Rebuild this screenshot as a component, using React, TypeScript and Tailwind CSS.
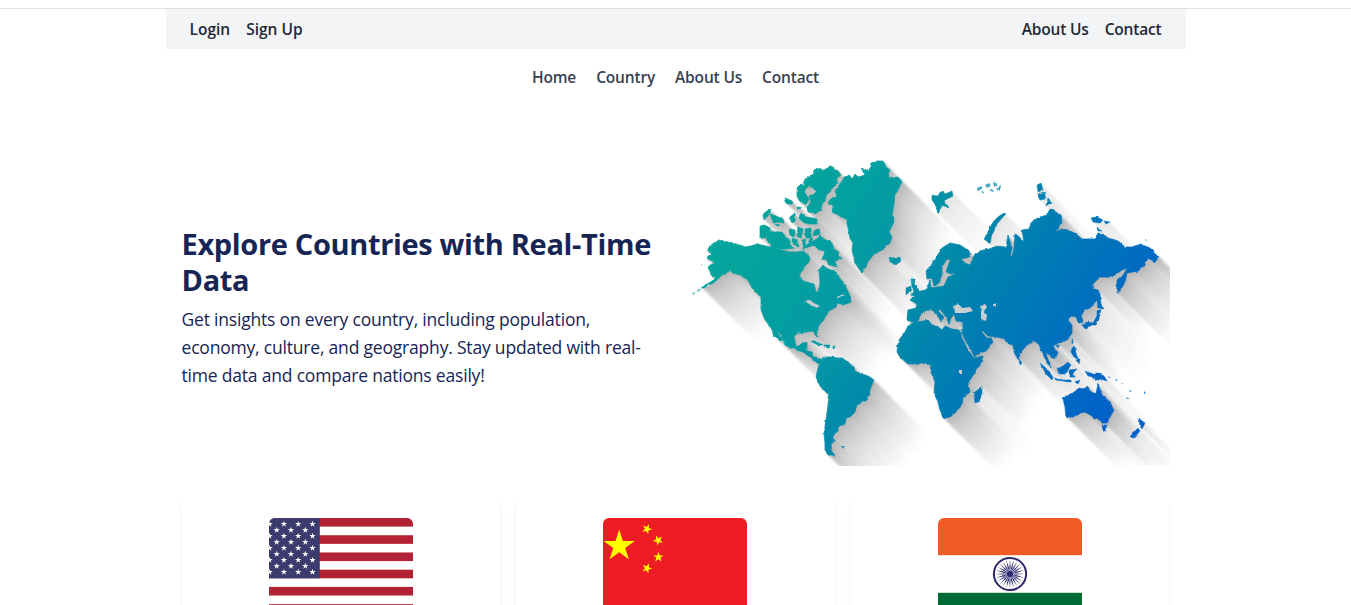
import React from "react";

const LARGE_LAND = [
  // North America
  "M719 240 L711 245 707 250 712 253 706 258 715 262 708 267 711 275 716 277 712 281 701 288 704 288 715 282 722 275 730 271 740 275 748 280 753 290 761 297 761 310 765 320 770 326 774 335 780 341 782 340 776 330 780 334 785 345 793 349 803 352 810 357 816 362 820 364 822 360 817 357 813 357 812 352 807 351 807 342 802 343 798 347 795 343 794 336 798 333 807 332 813 331 816 336 818 337 817 331 819 325 823 321 826 316 829 311 836 307 838 303 844 305 851 302 850 296 846 287 841 280 837 273 833 270 828 269 823 265 819 270 820 283 818 292 816 292 814 284 803 281 799 275 804 267 809 262 810 257 803 251 796 252 790 252 782 250 770 247 757 244 751 246 745 247 733 243Z",
  // Arctic archipelago
  "M803 250 L804 241 807 246 810 239 812 238 813 242 820 235 824 239 832 243 834 249 839 252 838 256 842 258 834 261 838 267 829 265 826 260 822 259 825 252 818 249 814 245 810 246Z",
  "M766 230 L774 232 782 232 786 237 790 240 790 246 794 248 788 249 780 249 771 247 767 240Z",
  "M760 226 L764 225 770 227 769 231 766 234 766 238 760 237Z",
  "M770 213 L776 216 783 219 784 223 778 222 773 223Z M763 215 L766 211 771 210 768 216 764 220Z M785 198 L792 201 793 204 787 204Z M775 224 L780 225 777 226Z",
  "M789 229 L795 230 794 237 790 235Z M792 238 L797 240 799 247 794 245Z M798 227 L803 229 801 238 797 236Z M805 229 L811 228 811 238 806 238Z M814 230 L819 229 820 234 813 236Z M802 240 L806 239 803 245Z",
  "M801 212 L806 217 812 218 817 219 817 224 809 224 802 222 799 218Z M790 217 L795 213 795 221 792 223Z M797 206 L801 208 798 210Z",
  "M803 182 L807 177 812 175 815 170 822 168 824 170 831 166 838 171 841 175 836 179 839 183 833 187 830 192 826 195 826 200 822 204 821 209 817 213 808 212 807 207 811 203 809 196 817 192 812 187 806 187Z",
  "M797 188 L801 184 807 187 805 193 809 199 806 204 800 202 797 196Z",
  // Greenland
  "M828 203 L831 198 837 197 835 191 840 184 844 178 849 175 852 179 855 174 858 177 865 175 861 168 869 171 871 163 877 161 883 161 886 167 890 170 889 176 893 178 898 177 902 182 898 190 895 193 894 204 893 210 892 216 894 222 889 232 892 237 890 243 882 250 874 254 868 262 865 268 862 273 855 263 852 250 853 243 850 238 848 228 846 219 838 215 832 212 833 206Z",
  // South America
  "M820 363 L823 357 832 357 837 358 842 358 849 363 854 367 855 371 862 374 868 376 874 380 870 390 867 400 857 405 855 412 850 417 846 418 845 424 838 427 838 431 833 436 835 441 831 444 832 452 835 455 828 455 825 450 825 443 824 434 826 420 828 405 829 395 820 386 816 377 818 368Z",
  // Africa
  "M913 323 L928 320 932 325 937 326 942 330 945 326 952 329 959 330 962 338 968 350 973 357 983 356 981 363 972 377 968 383 970 392 963 398 962 405 955 413 950 417 943 418 940 410 938 402 934 393 935 382 931 372 930 365 922 363 915 364 908 364 900 357 897 352 898 344 899 340 905 332 908 326Z",
  // Eurasia
  "M908 310 L907 320 913 323 918 321 923 312 930 309 937 314 941 322 944 317 938 311 940 309 946 317 949 324 951 318 954 315 956 321 963 322 963 329 961 330 965 340 970 348 974 356 979 354 987 350 993 342 991 338 987 338 981 331 983 331 988 336 997 337 1005 339 1009 344 1013 345 1014 352 1018 360 1021 352 1027 345 1035 341 1040 347 1043 354 1047 363 1051 368 1049 362 1045 352 1049 355 1054 359 1058 353 1053 346 1058 343 1067 340 1072 333 1072 325 1068 320 1071 316 1076 317 1079 323 1083 322 1081 315 1085 310 1090 308 1097 300 1098 290 1093 289 1092 285 1100 277 1108 277 1115 275 1122 270 1127 268 1124 274 1117 280 1117 293 1120 291 1125 282 1127 273 1138 271 1145 265 1148 258 1155 262 1159 257 1150 248 1140 244 1132 247 1125 247 1118 241 1108 238 1103 234 1098 233 1095 239 1082 239 1076 234 1068 230 1061 229 1055 232 1062 223 1061 215 1054 211 1050 209 1047 215 1040 217 1032 221 1029 229 1022 230 1024 242 1017 235 1015 234 1014 248 1012 256 1010 256 1012 248 1008 235 1006 247 995 246 990 249 983 250 975 254 970 265 965 263 961 259 970 257 969 251 960 245 950 243 942 248 935 260 926 271 927 279 932 278 934 286 939 283 942 275 942 267 947 259 950 260 946 272 951 274 957 274 948 277 944 286 937 287 931 288 930 280 927 289 918 292 910 300 917 304 916 308Z",
  // Australia
  "M1063 398 L1073 393 1079 388 1083 389 1088 386 1091 392 1096 394 1098 384 1102 395 1110 402 1114 410 1110 417 1107 423 1102 423 1097 418 1094 419 1092 416 1085 412 1080 413 1073 417 1066 417 1065 407Z",
];

const SMALL_LAND = [
  "M889 257 L894 258 900 257 901 261 896 265 890 262Z",
  "M911 279 L915 279 914 284 918 288 920 294 911 296 914 291 912 287Z M906 288 L911 286 911 292 906 294Z",
  "M932 195 L937 196 939 193 943 191 945 194 952 191 953 196 947 199 944 201 949 208 942 205 938 214 936 206 932 200Z",
  "M1004 213 Q992 219 987 234 L984 239 990 244 992 234 Q996 223 1006 214Z",
  "M1037 185 L1041 183 1043 190 1038 192Z M1037 194 L1044 192 1046 199 1040 200Z M1048 198 L1052 203 1046 206Z",
  "M1091 218 L1097 217 1103 220 1100 223 1093 222Z M1104 221 L1110 222 1106 224Z M1097 227 L1101 231 1098 231Z",
  "M975 392 L982 386 982 393 979 402 975 403 974 397Z",
  "M1098 290 L1100 294 1101 304 1104 309 1098 308 1097 300Z",
  "M1083 325 L1088 322 1093 323 1097 316 1097 311 1101 309 1099 319 1096 325 1089 325 1087 329 1084 328Z",
  "M1072 339 L1074 341 1072 344Z M1056 345 L1060 345 1058 348Z M1019 359 L1022 363 1020 365Z",
  "M1072 348 L1075 347 1076 354 1079 360 1074 357 1071 352Z M1076 360 L1080 359 1079 364Z",
  "M1057 369 L1063 366 1068 362 1070 366 1066 374 1059 374Z M1040 363 L1047 369 1053 377 1052 380 1046 374Z",
  "M1054 378 L1063 380 1071 380 1070 382 1056 380Z M1069 370 L1077 369 1073 373 1075 377 1070 377Z M1075 382 L1080 380 1078 384Z",
  "M1085 371 L1089 373 1098 373 1104 376 1107 381 1101 379 1096 381 1094 377 1088 376Z",
  "M1102 425 L1107 425 1106 431 1103 431Z",
  "M1139 418 L1142 421 1145 423 1142 429 1140 426Z M1138 428 L1140 431 1134 438 1130 437 1133 433Z",
  "M811 341 L816 341 822 345 818 345 812 342Z M824 345 L830 345 829 348 824 347Z M833 346 L835 346 835 348 833 348Z",
];

const SPECKS = [
  "M977 188 L981 186 982 189 978 191Z M985 185 L989 183 991 186 987 188Z M993 182 L998 184 994 187Z M996 188 L1001 185 1000 191Z M989 190 L992 189 993 192Z M982 191 L984 192 983 194Z",
  "M1108 376 L1111 378 1109 378Z M1115 379 L1118 380 1116 381Z M1121 382 L1124 384 1121 383Z M1129 390 L1132 391 1130 392Z M1126 397 L1130 399 1127 399Z M1144 391 L1146 393 1144 394Z",
  "M841 446 L845 446 843 449Z M701 264 L705 266 702 266Z M691 293 L696 292 693 294Z M697 290 L702 288 698 292Z M1145 239 L1147 240 1146 241Z",
];

const INLAND_WATER =
  "M954 306 L958 304 963 308 970 307 973 311 965 313 955 313Z M980 306 L985 304 987 307 984 311 987 315 986 321 981 319 981 312Z M993 305 L996 303 996 307Z M959 370 L962 370 962 374 959 374Z M804 301 L810 300 814 303 820 306 817 308 811 305Z M835 298 L841 295 846 294 840 298Z M811 248 L814 249 813 252Z M822 250 L824 252 823 256Z";

const shade = (d: number, start: number, reach: number) => {
  const v = Math.round(start + (255 - start) * Math.pow(d / reach, 0.58));
  return `rgb(${v},${v},${v})`;
};

const steps = (n: number) => Array.from({ length: n }, (_, i) => n - i);

function WorldMap() {
  return (
    <svg viewBox="692 147 478 319" className="block h-[319px] w-full" role="img" aria-label="World map">
      <defs>
        <linearGradient id="land" gradientUnits="userSpaceOnUse" x1="750" y1="225" x2="1090" y2="440">
          <stop offset="0" stopColor="#04a59c" />
          <stop offset="0.25" stopColor="#049da3" />
          <stop offset="0.52" stopColor="#0084ad" />
          <stop offset="0.74" stopColor="#0075ba" />
          <stop offset="1" stopColor="#0061c8" />
        </linearGradient>
        <filter
          id="coast"
          filterUnits="userSpaceOnUse"
          x="680"
          y="140"
          width="500"
          height="340"
          colorInterpolationFilters="sRGB"
        >
          <feTurbulence type="fractalNoise" baseFrequency="0.25" numOctaves="1" seed="4" result="n" />
          <feDisplacementMap in="SourceGraphic" in2="n" scale="3" xChannelSelector="R" yChannelSelector="G" />
          <feGaussianBlur stdDeviation="0.4" />
        </filter>
        <filter id="soft" filterUnits="userSpaceOnUse" x="680" y="140" width="500" height="340">
          <feGaussianBlur stdDeviation="1.3" />
        </filter>
        <path id="large" d={LARGE_LAND.join(" ")} />
        <path id="small" d={SMALL_LAND.join(" ")} />
      </defs>
      <g filter="url(#soft)">
        {steps(54).map((d) => (
          <g key={d} transform={`translate(${d} ${d})`}>
            <use href="#small" fill={shade(d, 226, 54)} />
            <use href="#large" fill={shade(d, 176, 54)} />
          </g>
        ))}
      </g>
      <g filter="url(#coast)">
        <use href="#large" fill="url(#land)" stroke="url(#land)" strokeWidth="0.7" />
        <use href="#small" fill="url(#land)" stroke="url(#land)" strokeWidth="0.5" />
        <path d={SPECKS.join(" ")} fill="url(#land)" opacity="0.75" />
        <path d={INLAND_WATER} fill="#c9ced1" />
      </g>
    </svg>
  );
}

const starPoints = (cx: number, cy: number, r: number, turn = 0) =>
  Array.from({ length: 10 }, (_, i) => {
    const a = ((i * 36 - 90 + turn) * Math.PI) / 180;
    const q = i % 2 ? r * 0.382 : r;
    return `${(cx + q * Math.cos(a)).toFixed(2)},${(cy + q * Math.sin(a)).toFixed(2)}`;
  }).join(" ");

const flagClass = "block h-28 w-36 rounded-md";

function FlagUS() {
  const stars: [number, number][] = [];
  for (let r = 0; r < 9; r++) {
    const odd = r % 2 === 1;
    for (let c = 0; c < (odd ? 3 : 4); c++) stars.push([(odd ? 7.7 : 0.6) + c * 14.3, 6 + r * 6]);
  }
  return (
    <svg viewBox="0 0 144 112" className={flagClass}>
      <rect width="144" height="112" fill="#fff" />
      {[0, 2, 4, 6, 8, 10, 12].map((i) => (
        <rect key={i} y={i * 8.615} width="144" height="8.615" fill="#b22234" />
      ))}
      <rect width="50.8" height="60.3" fill="#3c3b6e" />
      {stars.map(([x, y], i) => (
        <polygon key={i} points={starPoints(x, y, 3.3)} fill="#fff" />
      ))}
    </svg>
  );
}

function FlagChina() {
  return (
    <svg viewBox="0 0 144 112" className={flagClass}>
      <rect width="144" height="112" fill="#ee1c25" />
      <polygon points={starPoints(16.2, 28, 16.4)} fill="#ff0" />
      <polygon points={starPoints(44, 11, 5.4, 23)} fill="#ff0" />
      <polygon points={starPoints(55.2, 22.3, 5.4, 46)} fill="#ff0" />
      <polygon points={starPoints(55.4, 39.2, 5.4, 0)} fill="#ff0" />
      <polygon points={starPoints(44, 50.3, 5.4, 21)} fill="#ff0" />
    </svg>
  );
}

function FlagIndia() {
  return (
    <svg viewBox="0 0 144 112" className={flagClass}>
      <rect width="144" height="112" fill="#fff" />
      <rect width="144" height="37.2" fill="#f15b25" />
      <rect y="74.8" width="144" height="37.2" fill="#006a35" />
      <circle cx="72" cy="56" r="16.1" fill="none" stroke="#2c2a6b" strokeWidth="2" />
      {Array.from({ length: 24 }, (_, i) => (
        <polygon
          key={i}
          points="72,56 71.4,49 72,41.5 72.6,49"
          fill="#2c2a6b"
          transform={`rotate(${i * 15} 72 56)`}
        />
      ))}
      <circle cx="72" cy="56" r="4.8" fill="#8d8bb5" />
      <circle cx="72" cy="56" r="3.1" fill="#2c2a6b" />
    </svg>
  );
}

export default function App() {
  return (
    <div className="h-[605px] overflow-hidden bg-white pt-2 font-['Open_Sans','Noto_Sans',sans-serif]">
      <div className="border-t border-[#e0e0e0]">
        <div className="mx-auto w-[1020px]">
          <div className="flex h-10 items-center justify-between bg-gray-100 px-6 pt-0.5 text-[15.5px] font-semibold text-gray-800">
            <div className="flex gap-4">
              <a>Login</a>
              <a>Sign Up</a>
            </div>
            <div className="flex gap-4 tracking-[-0.18px]">
              <a>About Us</a>
              <a>Contact</a>
            </div>
          </div>
          <nav className="flex h-14 items-center justify-center gap-5 pt-px text-[15.5px] font-semibold tracking-[-0.17px] text-gray-700">
            <a>Home</a>
            <a>Country</a>
            <a>About Us</a>
            <a>Contact</a>
          </nav>
          <section className="mt-[42px] grid grid-cols-2 items-center gap-8 px-4 text-[#172554]">
            <div className="pt-0.5">
              <h1 className="text-[29px] leading-9 font-bold tracking-[-0.34px] whitespace-nowrap">
                Explore Countries with Real-Time
                <br />
                Data
              </h1>
              <p className="mt-[7px] text-[17.5px] leading-7 tracking-[-0.195px] whitespace-nowrap">
                Get insights on every country, including population,
                <br />
                economy, culture, and geography. Stay updated with real-
                <br />
                time data and compare nations easily!
              </p>
            </div>
            <WorldMap />
          </section>
          <section className="mt-8 grid grid-cols-3 gap-4 px-4">
            {[FlagUS, FlagChina, FlagIndia].map((Flag, i) => (
              <article
                key={i}
                className="flex h-64 justify-center rounded-lg bg-white pt-5 shadow-[0_4px_6px_-1px_rgba(0,0,0,0.1)]"
              >
                <Flag />
              </article>
            ))}
          </section>
        </div>
      </div>
    </div>
  );
}
